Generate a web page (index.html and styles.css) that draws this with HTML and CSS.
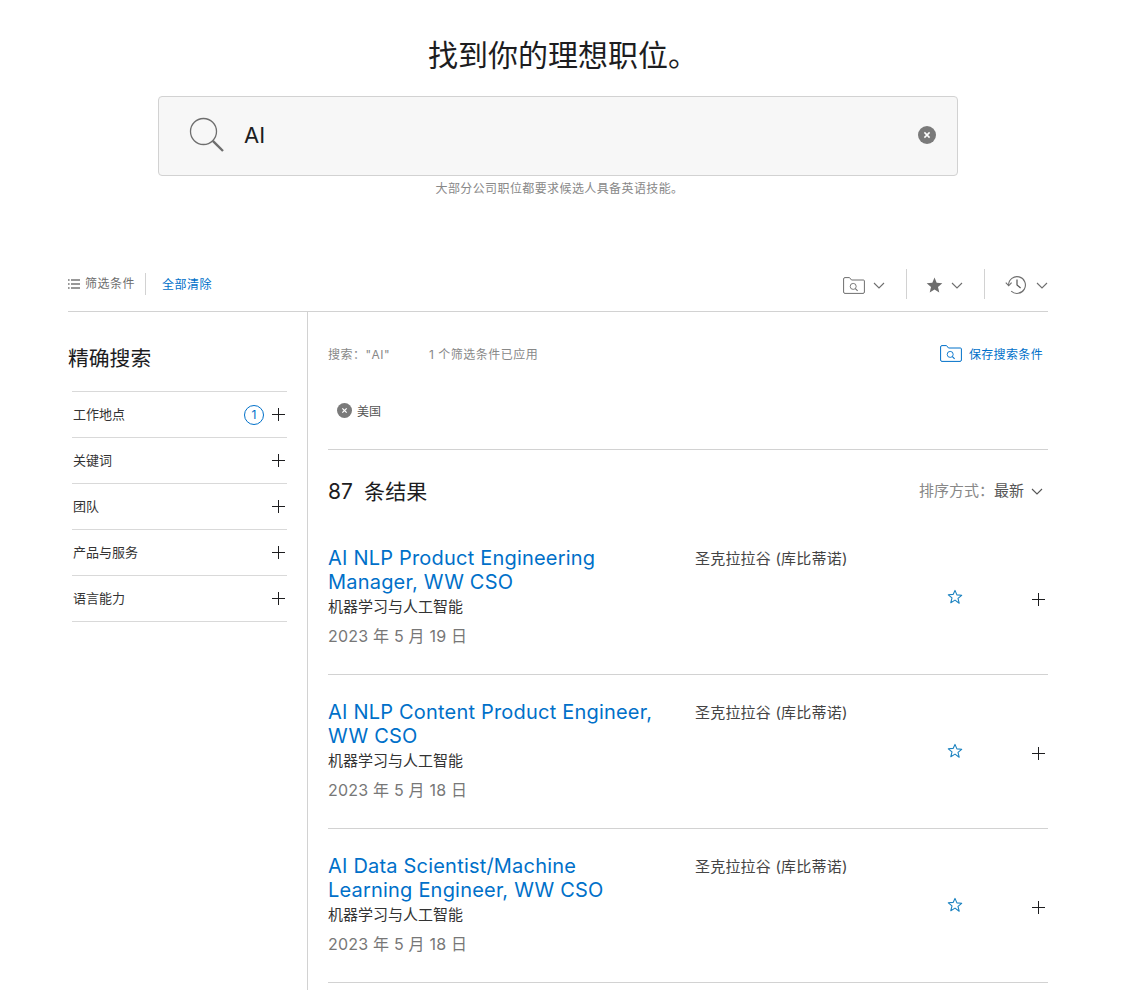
FILE: index.html
```html
<!DOCTYPE html>
<html lang="zh-CN">
<head>
<meta charset="utf-8">
<title>找到你的理想职位</title>
<link rel="stylesheet" href="styles.css">
</head>
<body>
<svg class="defs" width="0" height="0" aria-hidden="true">
  <defs>
    <symbol id="plus" viewBox="0 0 13 13"><path d="M6.5 0v13M0 6.5h13" fill="none" stroke="currentColor" stroke-width="1"/></symbol>
    <symbol id="chev" viewBox="0 0 12 7"><path d="M1 1l5 5 5-5" fill="none" stroke="currentColor" stroke-width="1.1"/></symbol>
    <symbol id="folder" viewBox="0 0 22 17"><path d="M.6 15V2A1.4 1.4 0 0 1 2 .6h4.5L8.5 3h11.9A1 1 0 0 1 21.4 4v11a1.4 1.4 0 0 1-1.4 1.4H2A1.4 1.4 0 0 1 .6 15z" fill="none" stroke="currentColor" stroke-width="1"/><circle cx="10.2" cy="9.4" r="3" fill="none" stroke="currentColor" stroke-width=".9"/><path d="M12.4 11.6l2.2 2.2" stroke="currentColor" stroke-width="1.1"/></symbol>
    <symbol id="star" viewBox="0 0 16 16"><path d="M8 1.4l1.9 4.5 4.8.4-3.7 3.1 1.2 4.8L8 11.1l-4.2 2.6L5 8.9 1.3 5.8l4.8-.4z" fill="none" stroke="currentColor" stroke-width="1.1" stroke-linejoin="round"/></symbol>
    <symbol id="x-circle" viewBox="0 0 18 18"><circle cx="9" cy="9" r="9" fill="currentColor"/><path d="M6.4 6.4l5.2 5.2M11.6 6.4l-5.2 5.2" stroke="#fff" stroke-width="1.5"/></symbol>
  </defs>
</svg>
<div class="page">
  <header class="hero">
    <h1 class="hero-title">找到你的理想职位。</h1>
    <div class="search-box">
      <svg class="search-icon" viewBox="0 0 36 36"><circle cx="14.5" cy="14.5" r="13" fill="none" stroke="#6e6e6e" stroke-width="1.3"/><path d="M23.8 23.8L34 34" stroke="#6e6e6e" stroke-width="2.4"/></svg>
      <span class="search-value">AI</span>
      <svg class="search-clear"><use href="#x-circle"/></svg>
    </div>
    <p class="search-hint">大部分公司职位都要求候选人具备英语技能。</p>
  </header>

  <div class="toolbar">
    <div class="toolbar-left">
      <svg class="list-icon" viewBox="0 0 12 10"><path d="M0 1h1.6M0 5h1.6M0 9h1.6M3 1h9M3 5h9M3 9h9" stroke="#333" stroke-width="1.1"/></svg>
      <span class="toolbar-label">筛选条件</span>
      <span class="toolbar-clear">全部清除</span>
    </div>
    <div class="toolbar-right">
      <div class="tool tool-folder"><svg class="tool-folder-icon"><use href="#folder"/></svg><svg class="chev"><use href="#chev"/></svg></div>
      <div class="tool tool-star"><svg class="tool-star-icon" viewBox="0 0 18 17"><path d="M9 .6l2.3 5.6 6 .5-4.6 3.9 1.4 5.9L9 13.4l-5.1 3.1 1.4-5.9L.7 6.7l6-.5z" fill="#6e6e6e"/></svg><svg class="chev"><use href="#chev"/></svg></div>
      <div class="tool tool-history"><svg class="tool-history-icon" viewBox="0 0 22 20"><path d="M3.6 10a8.4 8.4 0 1 1 2.6 6.1" fill="none" stroke="#6e6e6e" stroke-width="1.1"/><path d="M.8 7.6l2.9 3.2 2.9-3.2" fill="none" stroke="#6e6e6e" stroke-width="1.1"/><path d="M12 4.6V10l3.6 3" fill="none" stroke="#555" stroke-width="1.2"/></svg><svg class="chev"><use href="#chev"/></svg></div>
    </div>
  </div>

  <div class="layout">
    <aside class="sidebar">
      <h2 class="sidebar-title">精确搜索</h2>
      <ul class="facets">
        <li class="facet"><span>工作地点</span><span class="facet-count">1</span><svg class="plus"><use href="#plus"/></svg></li>
        <li class="facet"><span>关键词</span><svg class="plus"><use href="#plus"/></svg></li>
        <li class="facet"><span>团队</span><svg class="plus"><use href="#plus"/></svg></li>
        <li class="facet"><span>产品与服务</span><svg class="plus"><use href="#plus"/></svg></li>
        <li class="facet"><span>语言能力</span><svg class="plus"><use href="#plus"/></svg></li>
      </ul>
    </aside>

    <main class="results">
      <div class="summary">
        <span class="summary-query">搜索："AI"</span>
        <span class="summary-count">1 个筛选条件已应用</span>
        <span class="save"><svg class="save-icon"><use href="#folder"/></svg>保存搜索条件</span>
      </div>
      <div class="chips">
        <span class="chip"><svg class="chip-x"><use href="#x-circle"/></svg>美国</span>
      </div>
      <div class="results-head">
        <h2 class="results-title">87 条结果</h2>
        <div class="sort"><span class="sort-label">排序方式：</span><span class="sort-value">最新</span><svg class="sort-chev"><use href="#chev"/></svg></div>
      </div>

      <article class="job">
        <div class="job-main">
          <a class="job-title">AI NLP Product Engineering Manager, WW CSO</a>
          <div class="job-team">机器学习与人工智能</div>
          <div class="job-date">2023 年 5 月 19 日</div>
        </div>
        <div class="job-loc">圣克拉拉谷 (库比蒂诺)</div>
        <svg class="job-star"><use href="#star"/></svg>
        <svg class="plus job-plus"><use href="#plus"/></svg>
      </article>
      <article class="job">
        <div class="job-main">
          <a class="job-title">AI NLP Content Product Engineer, WW CSO</a>
          <div class="job-team">机器学习与人工智能</div>
          <div class="job-date">2023 年 5 月 18 日</div>
        </div>
        <div class="job-loc">圣克拉拉谷 (库比蒂诺)</div>
        <svg class="job-star"><use href="#star"/></svg>
        <svg class="plus job-plus"><use href="#plus"/></svg>
      </article>
      <article class="job">
        <div class="job-main">
          <a class="job-title">AI Data Scientist/Machine Learning Engineer, WW CSO</a>
          <div class="job-team">机器学习与人工智能</div>
          <div class="job-date">2023 年 5 月 18 日</div>
        </div>
        <div class="job-loc">圣克拉拉谷 (库比蒂诺)</div>
        <svg class="job-star"><use href="#star"/></svg>
        <svg class="plus job-plus"><use href="#plus"/></svg>
      </article>
    </main>
  </div>
</div>
</body>
</html>
```

FILE: styles.css
```css
* { box-sizing: border-box; }
html, body { margin: 0; padding: 0; height: 990px; overflow: hidden; background: #fff; }
body { font-family: Inter, "Noto Sans CJK SC", "Noto Sans", sans-serif; color: #1d1d1f; }
.defs { position: absolute; }
.page { width: 980px; margin-left: 68px; }

.hero { display: flex; flex-direction: column; align-items: center; }
.hero-title { margin: 33px 0 0; padding-left: 10px; height: 44px; line-height: 44px; font-size: 30px; font-weight: 400; }
.search-box { width: 800px; height: 80px; margin-top: 19px; display: flex; align-items: center; padding: 0 21px 2px 30px; background: #f7f7f7; border: 1px solid #d2d2d2; border-radius: 4px; }
.search-icon { width: 36px; height: 36px; flex: none; }
.search-value { margin-left: 19px; font-size: 22px; flex: 1; }
.search-clear { width: 18px; height: 18px; color: #7a7a7a; }
.search-hint { margin: 6px 0 0; padding-left: 3px; height: 14px; line-height: 14px; font-size: 12px; letter-spacing: .4px; color: #888; }

.toolbar { margin-top: 69px; height: 47px; display: flex; justify-content: space-between; align-items: center; border-bottom: 1px solid #d2d2d2; padding-bottom: 8px; font-size: 12px; }
.toolbar-left { display: flex; align-items: center; }
.list-icon { width: 12px; height: 10px; }
.toolbar-label { margin-left: 5px; color: #6e6e6e; letter-spacing: .5px; padding-right: 10px; height: 22px; line-height: 22px; border-right: 1px solid #d2d2d2; }
.toolbar-clear { margin: -2px 0 0 16px; letter-spacing: .5px; color: #0070c9; }
.toolbar-right { display: flex; align-items: center; color: #6e6e6e; }
.tool { display: flex; align-items: center; height: 30px; }
.tool svg { margin-top: 2px; }
.tool-folder { padding-right: 21px; border-right: 1px solid #d2d2d2; }
.tool-star { padding: 0 21px 0 19px; border-right: 1px solid #d2d2d2; }
.tool-history { padding: 0 0 0 20px; }
.tool-folder-icon { width: 22px; height: 17px; }
.tool-star-icon { width: 17px; height: 16px; }
.tool-history-icon { width: 22px; height: 20px; }
.chev { width: 12px; height: 7px; margin-left: 8px; }
.tool-history .chev { margin-left: 9px; }

.layout { display: flex; min-height: 679px; }
.sidebar { width: 240px; flex: none; border-right: 1px solid #d2d2d2; padding-right: 20px; }
.sidebar-title { margin: 33px 0 18px; height: 28px; line-height: 28px; font-size: 20.8px; font-weight: 400; }
.facets { list-style: none; margin: 0 0 0 4px; padding: 0; border-top: 1px solid #d9d9d9; }
.facet { height: 46px; display: flex; align-items: center; font-size: 13px; color: #333; border-bottom: 1px solid #d9d9d9; padding: 0 2px 0 1px; }
.facet > span:first-child { flex: 1; margin-top: -2px; }
.facet-count { width: 20px; height: 20px; margin-right: 8px; border: 1px solid #0070c9; border-radius: 50%; display: flex; align-items: center; justify-content: center; color: #0070c9; font-size: 12px; }
.plus { width: 13px; height: 13px; color: #1d1d1f; flex: none; }

.results { flex: 1; padding-left: 20px; min-width: 0; }
.summary { display: flex; align-items: center; margin-top: 30px; height: 22px; font-size: 12px; letter-spacing: .5px; color: #888; }
.summary-query { width: 101px; }
.summary-count { flex: 1; }
.save { display: flex; align-items: center; color: #0070c9; margin-right: 5px; letter-spacing: .35px; }
.save-icon { width: 22px; height: 17px; margin-right: 7px; }
.chips { height: 85px; padding: 38px 0 0 9px; }
.chip { display: inline-flex; align-items: center; font-size: 12px; color: #555; }
.chip-x { width: 15px; height: 15px; color: #7a7a7a; margin-right: 5px; }
.results-head { border-top: 1px solid #d2d2d2; height: 72px; display: flex; justify-content: space-between; padding-top: 26px; }
.results-title { margin: 1px 0 0; height: 30px; line-height: 30px; font-size: 21px; font-weight: 400; word-spacing: 5px; letter-spacing: .1px; }
.sort { display: flex; align-items: center; height: 30px; font-size: 15px; color: #888; margin-right: 5px; }
.sort-label, .sort-value { margin-top: -4px; }
.sort-value { color: #555; }
.sort-chev { width: 12px; height: 7px; margin-left: 7px; color: #555; }

.job { display: flex; height: 154px; padding-top: 25px; border-bottom: 1px solid #d2d2d2; }
.job-main { width: 367px; flex: none; padding-right: 37px; }
.job-title { display: block; font-size: 20px; line-height: 24px; letter-spacing: .2px; color: #0070c9; }
.job-team { font-size: 15px; line-height: 24px; margin-top: 1px; color: #333; }
.job-date { font-size: 16px; line-height: 24px; margin-top: 5px; letter-spacing: .2px; color: #777; }
.job-loc { font-size: 15px; line-height: 24px; margin-top: 1px; letter-spacing: .2px; color: #444; flex: 1; }
.job-star { width: 16px; height: 16px; color: #1a82c0; margin: 43px 69px 0 0; flex: none; }
.job-plus { margin: 47px 3px 0 0; }
```
